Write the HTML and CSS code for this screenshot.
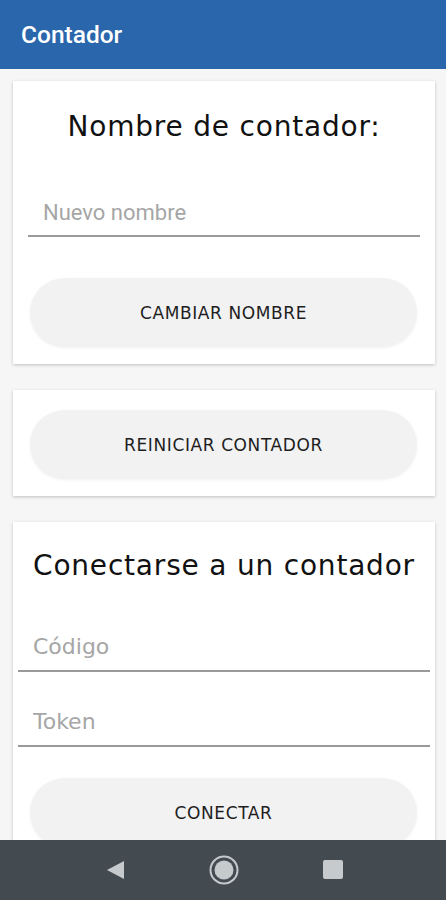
FILE: index.html
```html
<!DOCTYPE html>
<html lang="es">
<head>
  <meta charset="UTF-8">
  <meta name="viewport" content="width=device-width, initial-scale=1.0">
  <title>Contador</title>
  <link rel="stylesheet" href="styles.css">
</head>
<body>
  <header class="app-bar">Contador</header>

  <main class="content">
    <section class="card card-name">
      <h2 class="card-title">Nombre de contador:</h2>
      <input class="field field-roboto" type="text" placeholder="Nuevo nombre">
      <button class="pill-button" type="button">CAMBIAR NOMBRE</button>
    </section>

    <section class="card card-reset">
      <button class="pill-button" type="button">REINICIAR CONTADOR</button>
    </section>

    <section class="card card-connect">
      <h2 class="card-title">Conectarse a un contador</h2>
      <input class="field field-code" type="text" placeholder="Código">
      <input class="field field-token" type="text" placeholder="Token">
      <button class="pill-button" type="button">CONECTAR</button>
    </section>
  </main>

  <nav class="nav-bar">
    <svg class="nav-icon" width="20" height="20" viewBox="0 0 20 20">
      <path d="M19 1 L19 19 L2 10 Z" fill="#c6cacd"/>
    </svg>
    <svg class="nav-icon" width="30" height="30" viewBox="0 0 30 30">
      <circle cx="15" cy="15" r="13.5" fill="none" stroke="#c6cacd" stroke-width="2"/>
      <circle cx="15" cy="15" r="9.5" fill="#c6cacd"/>
    </svg>
    <svg class="nav-icon" width="20" height="20" viewBox="0 0 20 20">
      <rect x="0" y="0" width="20" height="19" rx="2" fill="#c6cacd"/>
    </svg>
  </nav>
</body>
</html>
```

FILE: styles.css
```css
* {
  box-sizing: border-box;
}

body {
  margin: 0;
  height: 100vh;
  display: flex;
  flex-direction: column;
  background-color: #f6f6f6;
  font-family: "DejaVu Sans", "Open Sans", sans-serif;
  color: #111;
}

.app-bar {
  height: 69px;
  flex-shrink: 0;
  padding-left: 21px;
  line-height: 69px;
  background-color: #2966ab;
  color: #fff;
  font-family: Roboto, "Liberation Sans", sans-serif;
  font-weight: 500;
  font-size: 24.5px;
}

.content {
  flex: 1;
  overflow: hidden;
  padding: 12px 11px 0 13px;
  display: flex;
  flex-direction: column;
  gap: 26px;
}

.card {
  background: #fff;
  box-shadow: 0 1px 3px rgba(0, 0, 0, 0.22);
  display: flex;
  flex-direction: column;
  flex-shrink: 0;
}

.card-title {
  margin: 0;
  height: 36px;
  line-height: 36px;
  text-align: center;
  font-weight: 400;
  font-size: 28px;
  letter-spacing: 0.8px;
  white-space: nowrap;
}

.field {
  border: none;
  border-bottom: 2px solid #9a9a9a;
  outline: none;
  padding: 0 0 0 15px;
  background: transparent;
  font-size: 22px;
  color: #333;
}

.field::placeholder {
  color: #a6a6a6;
}

.field-roboto {
  font-family: Roboto, sans-serif;
}

.field-code,
.field-token {
  font-family: "DejaVu Sans", sans-serif;
  font-size: 22px;
}

.pill-button {
  height: 69px;
  border: none;
  border-radius: 35px;
  background-color: #f2f2f2;
  box-shadow: 0 1px 3px rgba(0, 0, 0, 0.06);
  font-family: "DejaVu Sans", sans-serif;
  font-size: 17px;
  letter-spacing: 0.6px;
  color: #1e1e1e;
}

/* card 1 */
.card-name {
  height: 283px;
  padding: 28px 15px 17px;
}

.card-name .field {
  height: 47px;
  margin-top: 45px;
}

.card-name .pill-button {
  margin: 41px 3px 0 2px;
}

/* card 2 */
.card-reset {
  height: 106px;
  padding: 20px 18px 17px 17px;
}

/* card 3 */
.card-connect {
  padding: 26px 5px 0;
}

.card-connect .field-code {
  height: 49px;
  margin-top: 39px;
}

.card-connect .field-token {
  height: 49px;
  margin-top: 26px;
}

.card-connect .pill-button {
  margin: 31px 13px 0 12px;
}

.nav-bar {
  height: 60px;
  flex-shrink: 0;
  background-color: #434a50;
  display: flex;
  align-items: center;
  justify-content: center;
  gap: 84px;
  padding-left: 2px;
}
```
